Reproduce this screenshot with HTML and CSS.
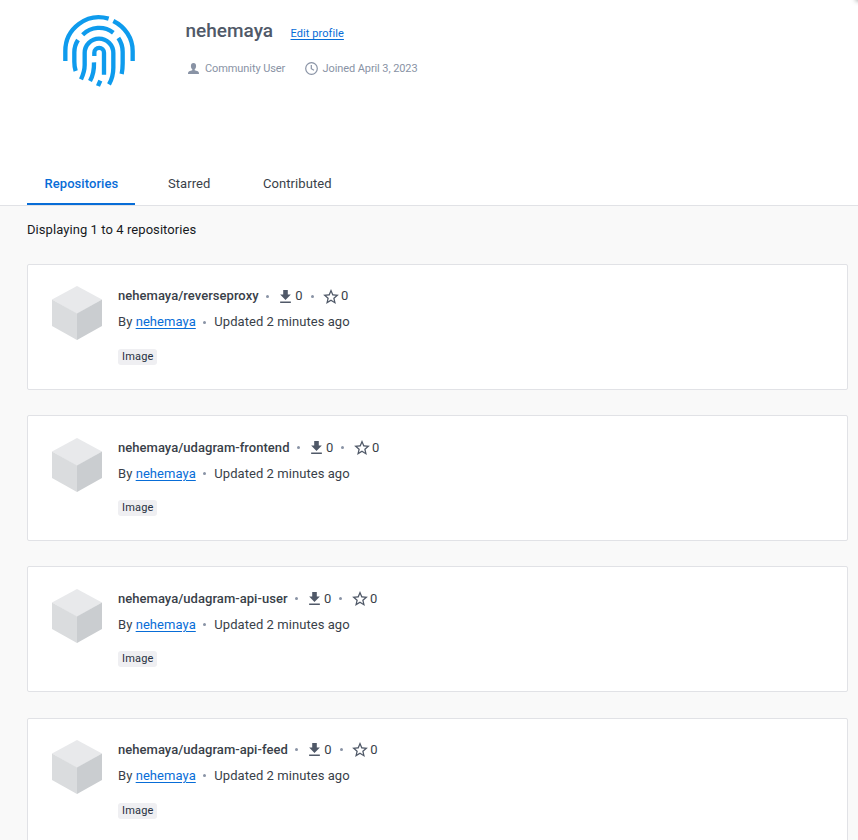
FILE: index.html
```html
<!DOCTYPE html>
<html lang="en">
<head>
<meta charset="utf-8">
<title>nehemaya</title>
<link rel="stylesheet" href="styles.css">
</head>
<body>
<svg class="defs" width="0" height="0" aria-hidden="true">
  <symbol id="cube" viewBox="0 0 50 54"><path fill="#e8e9eb" d="M25 0 50 13.5 25 28 0 13.5z"/><path fill="#dadcde" d="M0 13.5 25 27.5V54L0 40z"/><path fill="#cacdd0" d="M50 13.5 25 27.5V54L50 40z"/></symbol>
  <symbol id="download" viewBox="5 3 14 17"><path d="M19 9h-4V3H9v6H5l7 7 7-7zM5 18v2h14v-2H5z"/></symbol>
  <symbol id="star" viewBox="2 2 20 19"><path d="M22 9.24l-7.19-.62L12 2 9.19 8.63 2 9.24l5.46 4.73L5.82 21 12 17.27 18.18 21l-1.63-7.03L22 9.24zM12 15.4l-3.76 2.27 1-4.28-3.32-2.88 4.38-.38L12 6.1l1.71 4.04 4.38.38-3.32 2.88 1 4.28L12 15.4z"/></symbol>
</svg>
<div class="corner-shadow"></div>
<header class="profile">
  <svg class="avatar" viewBox="39 27 216 222" fill="none" stroke="#0e9bed" stroke-width="13">
    <path d="M46 168V138A101 101 0 0 1 176 41M190 48C226 66 248 100 248 138V168"/>
    <path d="M98 89A70 70 0 0 1 190 83"/>
    <path d="M84 105Q73 122 73 142V170Q73 185 77 198M205 99Q218 118 218 140V175Q218 192 215 207"/>
    <path d="M93 223Q104 200 104 180V144A43 43 0 0 1 190 144V188Q190 215 177 238"/>
    <path d="M133 153V143A14.500 14.500 0 0 1 162 143V209M132 172Q133 205 120 228"/>
    <path d="M151 227 144 243"/>
  </svg>
  <div class="info">
    <div class="title"><h1>nehemaya</h1><a href="#">Edit profile</a></div>
    <div class="meta">
      <svg class="person" viewBox="0 0 11 11"><path d="M5.500 0C3.800 0 2.900 1.200 2.900 2.900c0 1.600.6 2.700 1.400 3.300v1L1.200 8.300C.3 8.700 0 9.500 0 11h11c0-1.500-.3-2.300-1.200-2.700L6.700 7.200v-1c.8-.6 1.400-1.700 1.400-3.300C8.100 1.200 7.200 0 5.500 0z"/></svg>
      <span class="role">Community User</span>
      <svg class="clock" viewBox="0 0 13 13"><circle cx="6.500" cy="6.500" r="5.800"/><path d="M6.300 3v3.700l2.700 1.600"/></svg>
      <span class="joined">Joined April 3, 2023</span>
    </div>
  </div>
</header>
<nav class="tabs"><a class="tab active">Repositories</a><a class="tab starred">Starred</a><a class="tab">Contributed</a></nav>
<main>
  <p class="count">Displaying 1 to 4 repositories</p>
  <article class="card">
    <svg class="cube"><use href="#cube"/></svg>
    <div class="body">
      <div class="name"><strong>nehemaya/reverseproxy</strong><i class="dot"></i><svg class="download"><use href="#download"/></svg><span>0</span><i class="dot second"></i><svg class="star"><use href="#star"/></svg><span>0</span></div>
      <div class="by"><span>By <a href="#">nehemaya</a></span><i class="dot"></i><span>Updated 2 minutes ago</span></div>
      <span class="tag">Image</span>
    </div>
  </article>
  <article class="card">
    <svg class="cube"><use href="#cube"/></svg>
    <div class="body">
      <div class="name"><strong>nehemaya/udagram-frontend</strong><i class="dot"></i><svg class="download"><use href="#download"/></svg><span>0</span><i class="dot second"></i><svg class="star"><use href="#star"/></svg><span>0</span></div>
      <div class="by"><span>By <a href="#">nehemaya</a></span><i class="dot"></i><span>Updated 2 minutes ago</span></div>
      <span class="tag">Image</span>
    </div>
  </article>
  <article class="card">
    <svg class="cube"><use href="#cube"/></svg>
    <div class="body">
      <div class="name"><strong>nehemaya/udagram-api-user</strong><i class="dot"></i><svg class="download"><use href="#download"/></svg><span>0</span><i class="dot second"></i><svg class="star"><use href="#star"/></svg><span>0</span></div>
      <div class="by"><span>By <a href="#">nehemaya</a></span><i class="dot"></i><span>Updated 2 minutes ago</span></div>
      <span class="tag">Image</span>
    </div>
  </article>
  <article class="card">
    <svg class="cube"><use href="#cube"/></svg>
    <div class="body">
      <div class="name"><strong>nehemaya/udagram-api-feed</strong><i class="dot"></i><svg class="download"><use href="#download"/></svg><span>0</span><i class="dot second"></i><svg class="star"><use href="#star"/></svg><span>0</span></div>
      <div class="by"><span>By <a href="#">nehemaya</a></span><i class="dot"></i><span>Updated 2 minutes ago</span></div>
      <span class="tag">Image</span>
    </div>
  </article>
</main>
</body>
</html>
```
FILE: styles.css
```css
* { box-sizing: border-box; }
body { margin: 0; height: 840px; overflow: hidden; background: #f9f9f9; color: #393f49; font: 13px/20px Roboto, sans-serif; }
.defs { position: absolute; }
.corner-shadow { position: absolute; top: -4px; right: -4px; width: 5px; height: 4px; box-shadow: 0 0 5px 1px rgba(0, 0, 0, .4); }
svg { display: block; flex: none; }
a { color: #086dd7; text-underline-offset: 2px; text-decoration-thickness: 1px; }
.profile { display: flex; height: 162px; padding: 14px 0 0 63px; background: #fff; }
.avatar { width: 72px; height: 74px; overflow: visible; }
.info { margin-left: 50.500px; }
.title { display: flex; align-items: baseline; height: 34px; padding-top: 5px; }
h1 { margin: 0; font-size: 19px; line-height: 24px; font-weight: 500; color: #505968; width: 105px; }
.title a { font-size: 11px; letter-spacing: .08px; }
.meta { display: flex; align-items: center; height: 20px; margin-top: 10px; font-size: 11px; letter-spacing: -.09px; color: #8993a5; }
.meta span { padding-top: 1px; }
.person { width: 11px; height: 11px; margin: 0 6px 0 2.500px; fill: #8993a5; }
.role { width: 99.500px; }
.clock { width: 13px; height: 13px; margin-right: 5px; fill: none; stroke: #8993a5; stroke-width: 1.2; }
.tabs { display: flex; height: 44px; padding-left: 27px; background: #fff; border-bottom: 1px solid #e1e2e6; letter-spacing: .07px; }
.tab { height: 43px; padding: 12px 17px 0; color: #393f49; }
.tab.active { width: 108px; padding-left: 17.500px; color: #086dd7; font-weight: 500; border-bottom: 2px solid #086dd7; }
.tab.starred { width: 95px; margin-left: 16px; }
main { padding: 14px 10px 0 27px; }
.count { margin: 0 0 24px; color: #17191e; letter-spacing: .07px; }
.card { display: flex; width: 821px; height: 126.100px; margin-bottom: 25.100px; padding: 21px 24px; background: #fff; border: 1px solid #e1e2e6; border-radius: 2px; }
.cube { width: 50px; height: 54px; margin-top: .4px; }
.body { margin-left: 16px; padding-top: .4px; }
.name, .by { display: flex; align-items: center; height: 20px; letter-spacing: .06px; white-space: nowrap; }
.by { margin-top: 6px; }
strong { font-weight: 500; letter-spacing: .04px; }
.dot { width: 3px; height: 3px; margin: 0 8px 0 7.500px; border-radius: 50%; background: #8993a5; }
.download { width: 11px; height: 13px; margin: 0 4px 0 3px; fill: #505968; }
.dot.second { margin: 0 9.500px 0 8px; }
.star { width: 16px; height: 15px; margin-right: 2px; fill: #505968; }
.tag { display: block; width: 39px; height: 16px; margin-top: 16.600px; padding-left: 4px; border-radius: 3px; background: #efeff2; font-size: 11px; line-height: 15px; color: #27303f; letter-spacing: .2px; }
```
